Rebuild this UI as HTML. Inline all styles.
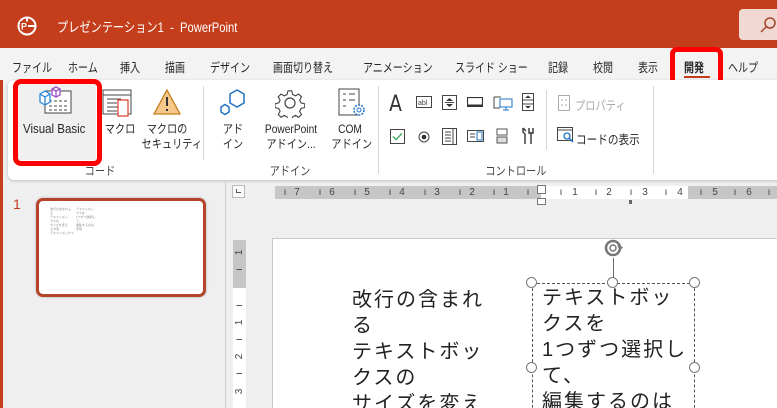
<!DOCTYPE html>
<html style="overflow:hidden;height:408px"><head><meta charset="utf-8"><style>
*{margin:0;padding:0;box-sizing:border-box}
body{width:777px;height:408px;overflow:hidden;background:#efefef;font-family:"Liberation Sans","Noto Sans CJK JP",sans-serif;position:relative;color:#262626}
.a{position:absolute;white-space:nowrap}
.t{font-size:12.5px;transform:scaleX(.8);transform-origin:left top}
.s{font-size:12px;text-align:center;line-height:15px;transform:scaleX(.85);transform-origin:center top}
.sep{position:absolute;width:1px;background:#d6d6d6}
.h{position:absolute;width:11px;height:11px;border:1.6px solid #777;border-radius:50%;background:#fff}
.st{font-size:20px;line-height:26px;color:#222;letter-spacing:2px}
.rn{position:absolute;top:186px;font-size:10px;line-height:13px;color:#444;width:8px;text-align:center}
.rv{position:absolute;left:233px;width:13px;font-size:10px;color:#444;text-align:center;transform:rotate(-90deg)}
</style></head><body>
<div class="a" style="left:0;top:0;width:777px;height:48px;background:#c43e1c"></div>
<svg class="a" style="left:16px;top:15px" width="22" height="22" viewBox="0 0 22 22"><circle cx="11" cy="11" r="8.5" fill="none" stroke="#fff" stroke-width="2"/><path d="M11 2.5V11H19.5" fill="none" stroke="#fff" stroke-width="2"/><rect x="4" y="6.5" width="8" height="9" fill="#c43e1c"/><text x="5" y="14.5" font-size="9" font-weight="bold" fill="#fff" font-family="Liberation Sans">P</text></svg>
<div class="a" style="left:57px;top:16px;color:#fff;font-size:13.5px;transform:scaleX(.83);transform-origin:left top">プレゼンテーション1 &nbsp;- &nbsp;PowerPoint</div>
<div class="a" style="left:739px;top:9px;width:45px;height:31px;background:#f2d8d2;border-radius:4px"></div>
<svg class="a" style="left:760px;top:17px" width="16" height="16"><circle cx="10" cy="6" r="5" fill="none" stroke="#a0442c" stroke-width="1.5"/><path d="M6.5 9.5L1 15" stroke="#a0442c" stroke-width="1.5"/></svg>
<div class="a" style="left:0;top:48px;width:777px;height:34px;background:#f3f3f3"></div>
<div class="a t" style="left:12px;top:57px">ファイル</div>
<div class="a t" style="left:68px;top:57px">ホーム</div>
<div class="a t" style="left:120px;top:57px">挿入</div>
<div class="a t" style="left:165px;top:57px">描画</div>
<div class="a t" style="left:210px;top:57px">デザイン</div>
<div class="a t" style="left:273px;top:57px">画面切り替え</div>
<div class="a t" style="left:363px;top:57px">アニメーション</div>
<div class="a t" style="left:455px;top:57px">スライド ショー</div>
<div class="a t" style="left:548px;top:57px">記録</div>
<div class="a t" style="left:593px;top:57px">校閲</div>
<div class="a t" style="left:638px;top:57px">表示</div>
<div class="a t" style="left:684px;top:57px;font-weight:bold">開発</div>
<div class="a" style="left:684px;top:76px;width:26px;height:2px;background:#c43e1c"></div>
<div class="a t" style="left:728px;top:57px">ヘルプ</div>
<div class="a" style="left:670px;top:47px;width:53px;height:39px;border:5px solid #ff0000;border-radius:7px"></div>
<div class="a" style="left:0;top:80px;width:3px;height:328px;background:#c43e1c"></div>
<div class="a" style="left:8px;top:80px;width:780px;height:100px;background:#fff;border-radius:6px;box-shadow:0 1px 3px rgba(0,0,0,.2)"></div>
<div class="a" style="left:18px;top:84px;width:78px;height:76px;background:#f0f0f0"></div>
<svg class="a" style="left:38px;top:86px" width="34" height="30"><rect x="7" y="5" width="26" height="22" fill="#fff" stroke="#444"/><path d="M11 15h18M11 20h18M11 24h18" stroke="#444" stroke-dasharray="3 2"/><path d="M2 8l5-3 5 3v8l-5 3-5-3z" fill="#fff" stroke="#2a88d6" stroke-width="1.3"/><path d="M2 8l5 3 5-3M7 11v8" stroke="#2a88d6" stroke-width="1.3" fill="none"/><path d="M14 3l4-2 4 2v6l-4 2-4-2z" fill="#fff" stroke="#9b4fc4" stroke-width="1.3"/><path d="M14 3l4 2 4-2M18 5v6" stroke="#9b4fc4" stroke-width="1.3" fill="none"/></svg>
<div class="a" style="left:23px;top:122px;font-size:12.5px;transform:scaleX(.92);transform-origin:left top">Visual Basic</div>
<div class="a" style="left:13px;top:79px;width:89px;height:87px;border:5px solid #ff0000;border-radius:8px"></div>
<svg class="a" style="left:101px;top:88px" width="32" height="32"><rect x="2" y="2" width="28" height="24" fill="#fff" stroke="#444"/><path d="M2 7h28M6 11h14M6 15h10M6 19h12M6 23h10" stroke="#444"/><path d="M17 12h10v16h-10z" fill="#fff" stroke="#e03c31" stroke-width="1.2"/></svg>
<div class="a s" style="left:100px;top:122px;width:40px">マクロ</div>
<svg class="a" style="left:152px;top:88px" width="30" height="28"><path d="M15 2L28 26H2z" fill="#f6c88a" stroke="#c47d1a" stroke-width="1.3"/><path d="M15 9v9M15 21v2" stroke="#333" stroke-width="2"/></svg>
<div class="a s" style="left:137px;top:122px;width:60px">マクロの<br>セキュリティ</div>
<div class="sep" style="left:203px;top:86px;height:74px"></div>
<svg class="a" style="left:218px;top:88px" width="30" height="30"><path d="M12 6l7-4 7 4v9l-7 4-7-4z" fill="#fff" stroke="#1f72c4" stroke-width="1.5"/><path d="M3 19l4-2.5 4 2.5v5l-4 2.5-4-2.5z" fill="#fff" stroke="#1f72c4" stroke-width="1.5"/></svg>
<div class="a s" style="left:218px;top:122px;width:30px">アド<br>イン</div>
<svg class="a" style="left:275px;top:88px" width="30" height="30" viewBox="0 0 30 30"><path d="M13 2h4l1 4 3 1.5 3.5-2 3 3-2 3.5 1.5 3 4 1v4l-4 1-1.5 3 2 3.5-3 3-3.5-2-3 1.5-1 4h-4l-1-4-3-1.5-3.5 2-3-3 2-3.5-1.5-3-4-1v-4l4-1 1.5-3-2-3.5 3-3 3.5 2 3-1.5z" fill="#fff" stroke="#444" stroke-width="1.2" transform="scale(.93) translate(1 1)"/><circle cx="15" cy="15" r="5" fill="none" stroke="#444" stroke-width="1.2"/></svg>
<div class="a s" style="left:253px;top:122px;width:76px">PowerPoint<br>アドイン...</div>
<svg class="a" style="left:337px;top:88px" width="30" height="30"><rect x="2" y="1" width="20" height="26" fill="#fff" stroke="#444"/><path d="M6 6h3M12 6h6M6 12h3M12 12h6M6 18h3" stroke="#444"/><circle cx="22" cy="22" r="5" fill="#fff" stroke="#1f72c4" stroke-width="1.5" stroke-dasharray="2 1.2"/><circle cx="22" cy="22" r="2" fill="none" stroke="#1f72c4"/></svg>
<div class="a s" style="left:328px;top:122px;width:44px">COM<br>アドイン</div>
<div class="sep" style="left:378px;top:86px;height:88px"></div>
<div class="a" style="left:388px;top:92px;font-size:22px;color:#333;font-family:'DejaVu Sans',sans-serif;transform:scaleX(.85)">A</div>
<svg class="a" style="left:416px;top:96px" width="16" height="12"><rect x=".5" y=".5" width="15" height="11" fill="#fff" stroke="#444"/><text x="2" y="9" font-size="7" fill="#444" font-family="Liberation Sans">abl</text></svg>
<svg class="a" style="left:442px;top:95px" width="15" height="15"><rect x=".5" y=".5" width="14" height="14" fill="#fff" stroke="#444"/><path d="M4 6l3.5-3 3.5 3zM4 9l3.5 3 3.5-3z" fill="#333"/><path d="M3 7.5h9" stroke="#444"/></svg>
<svg class="a" style="left:467px;top:97px" width="16" height="10"><rect x=".5" y=".5" width="15" height="9" fill="#fff" stroke="#333" stroke-width="1.2"/><path d="M1 8.5h14" stroke="#333" stroke-width="2"/></svg>
<svg class="a" style="left:493px;top:94px" width="20" height="17"><path d="M1 3h7M1 3v11h6" stroke="#444" fill="none"/><rect x="7" y="5" width="12" height="8" fill="#fff" stroke="#1f72c4"/><path d="M13 13v3M10 16h6" stroke="#1f72c4"/></svg>
<svg class="a" style="left:522px;top:93px" width="12" height="18"><rect x=".5" y=".5" width="11" height="17" fill="#fff" stroke="#444"/><path d="M3 5l3-2.5 3 2.5zM3 13l3 2.5 3-2.5z" fill="#333"/><path d="M1 7h10M1 11h10" stroke="#444"/></svg>
<svg class="a" style="left:390px;top:129px" width="15" height="15"><rect x=".5" y=".5" width="14" height="14" fill="#fff" stroke="#444"/><path d="M3 7.5l3 3 6-6" stroke="#3aa357" fill="none" stroke-width="1.3"/></svg>
<svg class="a" style="left:418px;top:131px" width="12" height="12"><circle cx="6" cy="6" r="5" fill="#fff" stroke="#444"/><circle cx="6" cy="6" r="2.3" fill="#333"/></svg>
<svg class="a" style="left:442px;top:128px" width="15" height="17"><rect x=".5" y=".5" width="14" height="16" fill="#fff" stroke="#444"/><path d="M3 4h6M3 7h6M3 10h6M3 13h6M11 1v15" stroke="#444"/></svg>
<svg class="a" style="left:467px;top:130px" width="17" height="12"><rect x=".5" y=".5" width="16" height="11" fill="#fff" stroke="#444"/><path d="M3 4h5M3 7h5" stroke="#444"/><rect x="10" y="2" width="5" height="8" fill="#fff" stroke="#1f72c4"/></svg>
<svg class="a" style="left:496px;top:128px" width="12" height="17"><rect x="1" y="1" width="10" height="6" fill="#fff" stroke="#555"/><rect x="1" y="9" width="10" height="6" fill="#ddd" stroke="#555"/></svg>
<svg class="a" style="left:520px;top:127px" width="16" height="18"><path d="M3 1v4l2 2v10M3 1l3 3M9 1v5h4V1M11 6v11" stroke="#333" fill="none" stroke-width="1.4"/></svg>
<div class="sep" style="left:546px;top:90px;height:60px"></div>
<svg class="a" style="left:558px;top:95px" width="12" height="16"><rect x=".5" y=".5" width="11" height="15" fill="#fff" stroke="#aaa"/><path d="M3 5h2M3 10h2M7 5h2M7 10h2" stroke="#aaa"/></svg>
<div class="a" style="left:575px;top:95px;font-size:12.5px;color:#aaa;transform:scaleX(.82);transform-origin:left top">プロパティ</div>
<svg class="a" style="left:557px;top:127px" width="18" height="16"><rect x=".5" y=".5" width="15" height="13" fill="#fff" stroke="#444"/><path d="M1 3h14" stroke="#444"/><circle cx="10" cy="9" r="3" fill="none" stroke="#1f72c4" stroke-width="1.3"/><path d="M12 11l4 4" stroke="#1f72c4" stroke-width="1.5"/></svg>
<div class="a" style="left:576px;top:129px;font-size:12.5px;transform:scaleX(.85);transform-origin:left top">コードの表示</div>
<div class="sep" style="left:653px;top:86px;height:88px"></div>
<div class="a s" style="left:80px;top:164px;width:40px;color:#444">コード</div>
<div class="a s" style="left:262px;top:164px;width:56px;color:#444">アドイン</div>
<div class="a s" style="left:480px;top:164px;width:70px;color:#444">コントロール</div>
<div class="a" style="left:225px;top:180px;width:1px;height:228px;background:#cfcfcf"></div>
<div class="a" style="left:13px;top:196px;font-size:14px;color:#c43e1c">1</div>
<div class="a" style="left:36px;top:198px;width:170px;height:99px;background:#fff;border:3px solid #b5452a;border-radius:7px;box-shadow:0 0 2px rgba(0,0,0,.3)"></div>
<div class="a" style="left:50px;top:207px;font-size:3px;line-height:4px;color:#888">改行の含まれる<br>る<br>テキストボッ<br>クスの<br>サイズを変え<br>る方法<br>テキストボックス</div>
<div class="a" style="left:76px;top:207px;font-size:3px;line-height:4px;color:#888">テキストボッ<br>クスを<br>1つずつ選択し<br>て、<br>編集するのは<br>手間</div>
<div class="a" style="left:232px;top:185px;width:13px;height:13px;border:1px solid #bbb;background:#fafafa"></div>
<div class="a" style="left:236px;top:189px;width:5px;height:4px;border-left:1.5px solid #555;border-bottom:1.5px solid #555"></div>
<div class="a" style="left:275px;top:186px;width:502px;height:13px;background:#c6c6c6"></div>
<div class="a" style="left:541px;top:186px;width:147px;height:13px;background:#fff"></div>
<div class="rn" style="left:293px">7</div><div class="rn" style="left:328px">6</div><div class="rn" style="left:363px">5</div><div class="rn" style="left:398px">4</div><div class="rn" style="left:433px">3</div><div class="rn" style="left:468px">2</div><div class="rn" style="left:502px">1</div>
<div class="rn" style="left:571px">1</div><div class="rn" style="left:605px">2</div><div class="rn" style="left:641px">3</div><div class="rn" style="left:676px">4</div><div class="rn" style="left:711px">5</div><div class="rn" style="left:745px">6</div>
<div class="rn" style="left:281px">ı</div><div class="rn" style="left:316px">ı</div><div class="rn" style="left:351px">ı</div><div class="rn" style="left:386px">ı</div><div class="rn" style="left:421px">ı</div><div class="rn" style="left:456px">ı</div><div class="rn" style="left:490px">ı</div><div class="rn" style="left:524px">ı</div><div class="rn" style="left:557px">ı</div><div class="rn" style="left:592px">ı</div><div class="rn" style="left:627px">ı</div><div class="rn" style="left:662px">ı</div><div class="rn" style="left:697px">ı</div><div class="rn" style="left:731px">ı</div><div class="rn" style="left:765px">ı</div>
<div class="a" style="left:537px;top:185px;width:9px;height:9px;border:1px solid #777;background:#fff"></div>
<div class="a" style="left:537px;top:198px;width:9px;height:7px;border:1px solid #777;background:#fff"></div>
<div class="a" style="left:629px;top:200px;width:3px;height:4px;background:#666"></div>
<div class="a" style="left:233px;top:240px;width:13px;height:168px;background:#fff"></div>
<div class="a" style="left:233px;top:240px;width:13px;height:48px;background:#c6c6c6"></div>
<div class="rv" style="top:247px">1</div><div class="rv" style="top:264px">ı</div><div class="rv" style="top:300px">ı</div><div class="rv" style="top:317px">1</div><div class="rv" style="top:334px">ı</div><div class="rv" style="top:351px">2</div><div class="rv" style="top:368px">ı</div><div class="rv" style="top:386px">3</div>
<div class="a" style="left:272px;top:238px;width:510px;height:175px;background:#fff;border:1px solid #c9c9c9"></div>
<div class="a st" style="left:352px;top:287px">改行の含まれ<br>る<br>テキストボッ<br>クスの<br>サイズを変え</div>
<div class="a" style="left:532px;top:283px;width:163px;height:140px;border:1px dashed #555"></div>
<div class="a st" style="left:542px;top:285px">テキストボッ<br>クスを<br>1つずつ選択し<br>て、<br>編集するのは</div>
<div class="a" style="left:613px;top:258px;width:1px;height:25px;background:#666"></div>
<svg class="a" style="left:603px;top:238px" width="22" height="20"><circle cx="10" cy="10" r="7" fill="none" stroke="#777" stroke-width="2.5"/><circle cx="10" cy="10" r="3" fill="none" stroke="#777" stroke-width="1.5"/><path d="M14 7l6 2-3 4z" fill="#777"/></svg>
<div class="h" style="left:526px;top:277px"></div>
<div class="h" style="left:607px;top:277px"></div>
<div class="h" style="left:689px;top:277px"></div>
<div class="h" style="left:526px;top:362px"></div>
<div class="h" style="left:689px;top:362px"></div>
</body></html>
